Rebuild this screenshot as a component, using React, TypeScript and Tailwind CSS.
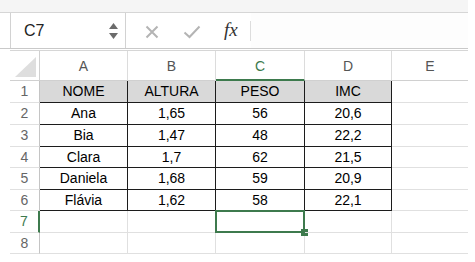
const cols = [
  { id: 'A', w: 'w-[88px]' },
  { id: 'B', w: 'w-[88px]' },
  { id: 'C', w: 'w-[89px]' },
  { id: 'D', w: 'w-[87px]' },
  { id: 'E', w: 'w-[76px]' },
];

const rowHeights = ['h-[22px]', 'h-[22px]', 'h-[22px]', 'h-[21px]', 'h-[22px]', 'h-[21px]', 'h-[22px]', 'h-[21px]'];

const data: string[][] = [
  ['NOME', 'ALTURA', 'PESO', 'IMC'],
  ['Ana', '1,65', '56', '20,6'],
  ['Bia', '1,47', '48', '22,2'],
  ['Clara', '1,7', '62', '21,5'],
  ['Daniela', '1,68', '59', '20,9'],
  ['Flávia', '1,62', '58', '22,1'],
];

function FormulaBar() {
  return (
    <div className="flex h-[36px] border-b border-[#c9c9c9] pl-[10px]">
      <div className="flex w-[116px] items-center justify-between border-l border-r border-[#d2d2d2] pl-[13px] pr-[7px]">
        <span className="text-[16px] text-[#222]">C7</span>
        <div className="flex flex-col gap-[4px]">
          <svg width="9" height="6" viewBox="0 0 9 6">
            <path d="M4.5 0 L9 6 L0 6 Z" fill="#6b6b6b" />
          </svg>
          <svg width="9" height="6" viewBox="0 0 9 6">
            <path d="M0 0 L9 0 L4.5 6 Z" fill="#6b6b6b" />
          </svg>
        </div>
      </div>
      <div className="flex items-center pl-[19px]">
        <svg width="14" height="14" viewBox="0 0 14 14" className="mt-[2px]">
          <path d="M1.5 1.5 L12.5 12.5 M12.5 1.5 L1.5 12.5" stroke="#b4b4b4" strokeWidth="2" />
        </svg>
        <svg width="18" height="14" viewBox="0 0 18 14" className="ml-[24px] mt-[2px]">
          <path d="M1.5 7.5 L6.5 12 L16.5 1.5" stroke="#b4b4b4" strokeWidth="2" fill="none" />
        </svg>
        <span
          className="ml-[23px] text-[19px] italic text-[#333]"
          style={{ fontFamily: '"Liberation Serif", "DejaVu Serif", serif' }}
        >
          fx
        </span>
        <div className="ml-[12px] h-[20px] w-px bg-[#dddddd]" />
      </div>
      <div className="flex-1 bg-[#fdfdfd]" />
    </div>
  );
}

export default function App() {
  return (
    <div className="h-[262px] w-[475px] overflow-hidden bg-white" style={{ fontFamily: '"Liberation Sans", Arial, sans-serif' }}>
      <div className="w-[468px]">
        <div className="h-[13px] border-b border-[#d6d6d6] bg-[#f5f5f5]" />
        <FormulaBar />
        <div className="mt-px ml-[10px] border-t border-[#d6d6d6]">
          {/* column headers */}
          <div className="flex h-[30px]">
            <div className="flex w-[30px] items-end justify-end border-r border-b border-[#d0d0d0] pb-[3px] pr-[3px]">
              <svg width="21" height="20" viewBox="0 0 21 20">
                <path d="M21 0 L21 20 L0 20 Z" fill="#dedede" />
              </svg>
            </div>
            {cols.map((c, i) => (
              <div
                key={c.id}
                className={`flex ${c.w} items-center justify-center pt-[2px] text-[14px] ${
                  c.id === 'C' ? 'border-b-2 border-b-[#3d7a4d] text-[#3d7a4d]' : 'border-b border-b-[#d0d0d0] text-[#555]'
                } ${i < 4 ? 'border-r border-r-[#dcdcdc]' : ''}`}
              >
                {c.id}
              </div>
            ))}
          </div>
          {/* rows */}
          {rowHeights.map((h, r) => (
            <div key={r} className={`relative flex ${h} ${r === 6 ? 'z-10' : ''}`}>
              <div
                className={`flex w-[30px] items-center justify-center border-b border-[#e0e0e0] text-[14px] ${
                  r === 6 ? 'border-r-2 border-r-[#3d7a4d] text-[#3d7a4d]' : 'border-r border-r-[#c4c4c4] text-[#666]'
                }`}
              >
                {r + 1}
              </div>
              {cols.map((c, ci) => {
                const inTable = r < 6 && ci < 4;
                return (
                  <div
                    key={c.id}
                    className={`relative flex ${c.w} items-center justify-center text-[14px] text-black ${
                      inTable ? 'border-r border-b border-[#1c1c1c]' : ci < 4 ? 'border-r border-b border-[#e0e0e0]' : 'border-b border-[#e0e0e0]'
                    } ${r === 0 && ci < 4 ? 'bg-[#d9d9d9]' : ''}`}
                  >
                    {inTable ? data[r][ci] : ''}
                    {r === 6 && ci === 2 && (
                      <>
                        <div className="absolute -top-px -left-px -right-px -bottom-px border-2 border-[#3d7a4d]" />
                        <div className="absolute -right-[4px] -bottom-[4px] h-[7px] w-[7px] bg-[#3d7a4d]" />
                      </>
                    )}
                  </div>
                );
              })}
            </div>
          ))}
        </div>
      </div>
    </div>
  );
}
